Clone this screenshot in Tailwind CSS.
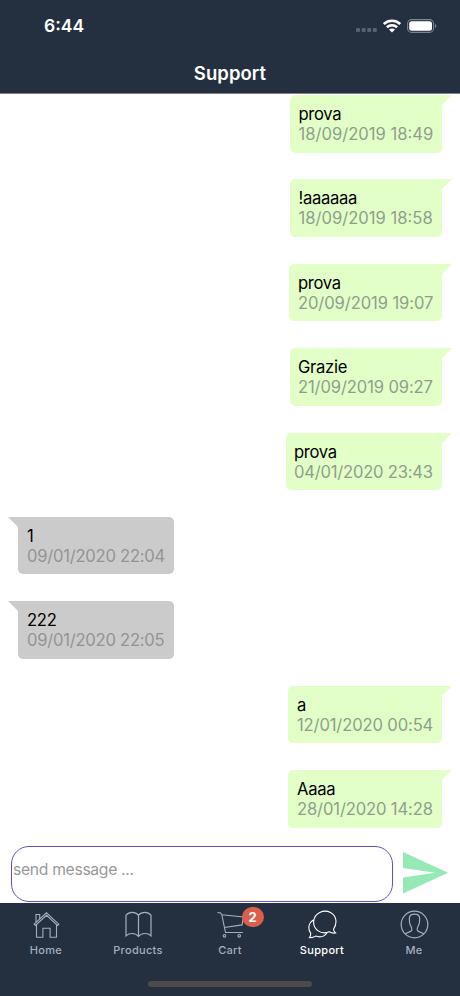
<!DOCTYPE html>
<html lang="en">
<head>
<meta charset="utf-8">
<meta name="viewport" content="width=device-width, initial-scale=1">
<title>Support</title>
<script src="https://cdn.jsdelivr.net/npm/@tailwindcss/browser@4"></script>
</head>
<body class="bg-white">
<div class="flex h-[996px] w-[460px] flex-col overflow-hidden bg-white font-['Inter',sans-serif] text-black">
  <header class="flex h-[94px] shrink-0 flex-col border-b border-[#7d8087] bg-[#243040] text-white">
    <div class="flex h-[51px] items-center justify-between pl-11 pr-[23px]">
      <span class="text-[17.500px] font-semibold leading-none">6:44</span>
      <div class="flex items-center gap-[6px]">
        <svg class="mt-2 h-1 w-[21px]" viewBox="0 0 21 4" fill="#566070"><rect width="4" height="4" rx="1"/><rect x="5.6" width="4" height="4" rx="1"/><rect x="11.2" width="4" height="4" rx="1"/><rect x="16.8" width="4" height="4" rx="1"/></svg>
        <svg class="h-[14px] w-[18px]" viewBox="0 0 18 14" fill="none" stroke="#fff" stroke-width="2.6"><path d="M.8 5C5.5.7 12.500.7 17.200 5M3.900 8.300c2.900-2.700 7.300-2.700 10.200 0"/><path d="M6 10.600c1.600-1.500 4.400-1.500 6 0L9 13.600z" fill="#fff" stroke="none"/></svg>
        <svg class="h-[14px] w-[30px]" viewBox="0 0 30 14"><rect x=".6" y=".6" width="26" height="12.800" rx="4" fill="none" stroke="#7c838d" stroke-width="1.100"/><rect x="2.200" y="2.200" width="22.800" height="9.600" rx="2.500" fill="#fff"/><path d="M28 4.800c1.800.8 1.800 3.600 0 4.400z" fill="#7c838d"/></svg>
      </div>
    </div>
    <h1 class="flex h-[42px] items-center justify-center pt-[3px] text-[18.500px] font-semibold leading-none tracking-[0.05px]">Support</h1>
  </header>

  <main class="flex h-[744px] shrink-0 flex-col gap-[26.900px] px-2 pt-[1px] text-[16.600px] leading-5">
    <div class="flex shrink-0 justify-end"><div class="h-[57.500px] w-[152px] rounded-[5px] rounded-tr-none bg-[#e1ffc7] pl-[8.500px] pt-[9px]"><p class="tracking-[-0.300px]">prova</p><p class="whitespace-nowrap text-[#919e8c]">18/09/2019 18:49</p></div><svg class="h-[10px] w-[10px]" viewBox="0 0 10 10"><path d="M0 0h10L0 10z" fill="#e1ffc7"/></svg></div>
    <div class="flex shrink-0 justify-end"><div class="h-[57.500px] w-[152px] rounded-[5px] rounded-tr-none bg-[#e1ffc7] pl-[8.500px] pt-[9px]"><p class="tracking-[-0.300px]">!aaaaaa</p><p class="whitespace-nowrap text-[#919e8c]">18/09/2019 18:58</p></div><svg class="h-[10px] w-[10px]" viewBox="0 0 10 10"><path d="M0 0h10L0 10z" fill="#e1ffc7"/></svg></div>
    <div class="flex shrink-0 justify-end"><div class="h-[57.500px] w-[153px] rounded-[5px] rounded-tr-none bg-[#e1ffc7] pl-[9px] pt-[9px]"><p class="tracking-[-0.300px]">prova</p><p class="whitespace-nowrap tracking-[-0.110px] text-[#919e8c]">20/09/2019 19:07</p></div><svg class="h-[10px] w-[10px]" viewBox="0 0 10 10"><path d="M0 0h10L0 10z" fill="#e1ffc7"/></svg></div>
    <div class="flex shrink-0 justify-end"><div class="h-[57.500px] w-[152.500px] rounded-[5px] rounded-tr-none bg-[#e1ffc7] pl-[8.500px] pt-[9px]"><p class="tracking-[-0.300px]">Grazie</p><p class="whitespace-nowrap tracking-[-0.130px] text-[#919e8c]">21/09/2019 09:27</p></div><svg class="h-[10px] w-[10px]" viewBox="0 0 10 10"><path d="M0 0h10L0 10z" fill="#e1ffc7"/></svg></div>
    <div class="flex shrink-0 justify-end"><div class="h-[57.500px] w-[156.500px] rounded-[5px] rounded-tr-none bg-[#e1ffc7] pl-[8.500px] pt-[9px]"><p class="tracking-[-0.300px]">prova</p><p class="whitespace-nowrap tracking-[-0.220px] text-[#919e8c]">04/01/2020 23:43</p></div><svg class="h-[10px] w-[10px]" viewBox="0 0 10 10"><path d="M0 0h10L0 10z" fill="#e1ffc7"/></svg></div>
    <div class="flex shrink-0"><svg class="h-[10px] w-[10px]" viewBox="0 0 10 10"><path d="M0 0h10v10z" fill="#cbcbcb"/></svg><div class="h-[57.500px] w-[156px] rounded-[5px] rounded-tl-none bg-[#cbcbcb] pl-[9px] pt-[9px]"><p>1</p><p class="whitespace-nowrap tracking-[-0.250px] text-[#949494]">09/01/2020 22:04</p></div></div>
    <div class="flex shrink-0"><svg class="h-[10px] w-[10px]" viewBox="0 0 10 10"><path d="M0 0h10v10z" fill="#cbcbcb"/></svg><div class="h-[57.500px] w-[156px] rounded-[5px] rounded-tl-none bg-[#cbcbcb] pl-[9px] pt-[9px]"><p class="tracking-[-0.300px]">222</p><p class="whitespace-nowrap tracking-[-0.250px] text-[#949494]">09/01/2020 22:05</p></div></div>
    <div class="flex shrink-0 justify-end"><div class="h-[57.500px] w-[154px] rounded-[5px] rounded-tr-none bg-[#e1ffc7] pl-[9px] pt-[9px]"><p>a</p><p class="whitespace-nowrap tracking-[-0.140px] text-[#919e8c]">12/01/2020 00:54</p></div><svg class="h-[10px] w-[10px]" viewBox="0 0 10 10"><path d="M0 0h10L0 10z" fill="#e1ffc7"/></svg></div>
    <div class="flex shrink-0 justify-end"><div class="h-[57.500px] w-[154px] rounded-[5px] rounded-tr-none bg-[#e1ffc7] pl-[9px] pt-[9px]"><p class="tracking-[-0.300px]">Aaaa</p><p class="whitespace-nowrap tracking-[-0.140px] text-[#919e8c]">28/01/2020 14:28</p></div><svg class="h-[10px] w-[10px]" viewBox="0 0 10 10"><path d="M0 0h10L0 10z" fill="#e1ffc7"/></svg></div>
  </main>

  <div class="flex h-[65px] shrink-0 pl-[11px] pt-2">
    <div class="flex h-[55.500px] w-[381.500px] items-center rounded-[18px] border-[1.500px] border-[#644fc0] pb-[8px] pl-[1px] text-[15.700px] tracking-[-0.310px] text-[#999]">send message ...</div>
    <svg class="ml-[10.500px] mt-[6px] h-[42px] w-[45px]" viewBox="0 0 45 42"><path d="M0 0l45 20.800L0 41.500V25.500l32-4.700L0 16z" fill="#94e9b4"/></svg>
  </div>

  <nav class="flex h-[93px] shrink-0 flex-col bg-[#243040] text-[11px] font-medium leading-[14px] tracking-[0.300px] text-[#a3afbd]">
    <div class="grid h-[78px] grid-cols-5 pt-[7px]">
      <div class="flex flex-col items-center gap-[4px]">
        <svg class="h-[29px] w-[29px]" viewBox="0 0 29 29" fill="none" stroke="currentColor" stroke-width="1.100"><path d="M2.200 14.200L14.500 2.800l12.300 11.400-1.200 1.300L14.500 5.300 3.400 15.500zM4 12.300V4.500h3.700v4.300M4.500 14.700v12.500h6.400v-8.900h7.200v8.900h6.400V14.700"/></svg>
        <span>Home</span>
      </div>
      <div class="flex flex-col items-center gap-[4px]">
        <svg class="h-[29px] w-[29px]" viewBox="0 0 29 29" fill="none" stroke="currentColor" stroke-width="1.200"><path d="M14.500 5.200C11.500 1.500 5 1.500 2 5.200v20.600c3.200-3.200 9.600-3.200 12.500.7 2.900-3.900 9.300-3.900 12.500-.7V5.200C24 1.500 17.500 1.500 14.500 5.200zM14.500 5.200v21.300"/></svg>
        <span>Products</span>
      </div>
      <div class="relative flex flex-col items-center gap-[4px]">
        <svg class="h-[29px] w-[29px]" viewBox="0 0 29 29" fill="none" stroke="currentColor" stroke-width="1.100"><path d="M1.500 2.500l3.200.5 1.100 1.700 3.700 17.800h17.300M5.800 4.700l21.500 2.200-1.200 8L8.400 17.500"/><circle cx="8.500" cy="25.800" r="1.300"/><circle cx="23.200" cy="25.800" r="1.300"/></svg>
        <span>Cart</span>
        <span class="absolute left-[57.500px] top-[-3px] flex h-[20px] w-[22px] items-center justify-center rounded-full bg-[#d95f4b] text-[13px] font-bold tracking-normal text-white">2</span>
      </div>
      <div class="flex flex-col items-center gap-[4px] text-white">
        <svg class="h-[29px] w-[29px]" viewBox="0 0 29 29" fill="none" stroke="currentColor" stroke-width="1.100"><path d="M25.500 19.300C29.600 13 28.600 5.700 22.500 2.500 15.500-1.100 6.400 3 5.700 11.300c-.8 8.300 7.600 13.800 15.500 10.500 1.800 1.100 4.200 1.500 6.300 1.200-1.200-1-1.900-2.300-2-3.700zM5.700 9.700C.6 12.500-.6 18.500 2.700 23.300c.1 1.600-.4 3.200-1.200 4.300 2.200.2 4.500-.4 6.200-1.500 4.200 1.400 8.600.7 11.300-3.400"/></svg>
        <span>Support</span>
      </div>
      <div class="flex flex-col items-center gap-[4px]">
        <svg class="h-[29px] w-[29px]" viewBox="0 0 29 29" fill="none" stroke="currentColor" stroke-width="1.200"><circle cx="14.500" cy="14.500" r="13.300"/><path d="M5.200 24c1.500-1.600 6.200-1.900 6.600-3.900.4-2.100-.5-3.100-1.300-4.700-.9-1.800-1.200-4.400-1.200-6.500 0-3.200 2-4.800 5.200-4.800s5.200 1.600 5.200 4.800c0 2.100-.3 4.700-1.200 6.500-.8 1.600-1.700 2.600-1.300 4.700.4 2 5.100 2.300 6.600 3.900"/></svg>
        <span>Me</span>
      </div>
    </div>
    <div class="mx-auto h-[6px] w-[164px] rounded-full bg-[#4b4b4b]"></div>
  </nav>
</div>
</body>
</html>
